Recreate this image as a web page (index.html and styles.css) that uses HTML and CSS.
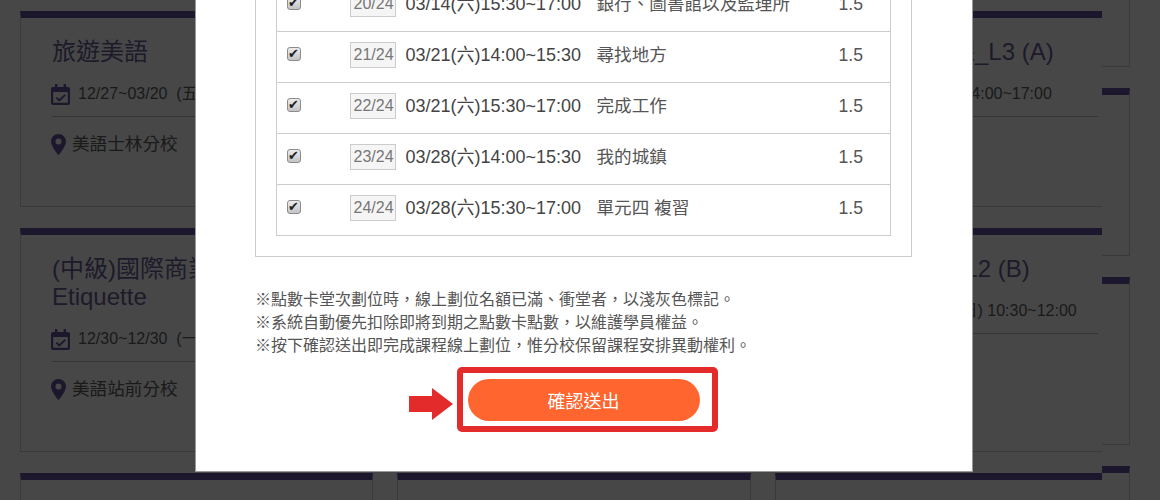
FILE: index.html
```html
<!DOCTYPE html>
<html lang="zh-Hant">
<head>
  <meta charset="UTF-8">
  <meta name="viewport" content="width=device-width, initial-scale=1.0">
  <title>課程線上劃位</title>
  <link rel="stylesheet" href="styles.css">
</head>
<body>
  <svg class="icon-defs" width="0" height="0">
    <symbol id="icon-date" viewBox="0 0 19 21">
      <path d="M4 0h2.4v3h6.2V0H15v3h2a2 2 0 0 1 2 2v14a2 2 0 0 1-2 2H2a2 2 0 0 1-2-2V5a2 2 0 0 1 2-2h2zM2.2 8v10.8h14.6V8z"/>
      <path d="M13.6 10.2l1.3 1.3-6.6 6.2-3.7-3.5 1.3-1.3 2.4 2.2z"/>
    </symbol>
    <symbol id="icon-pin" viewBox="0 0 15 21">
      <path fill-rule="evenodd" d="M7.5 0C3.4 0 0 3.3 0 7.4 0 12.6 7.5 21 7.5 21S15 12.6 15 7.4C15 3.3 11.6 0 7.5 0zm0 10.4a3 3 0 1 1 0-6 3 3 0 0 1 0 6z"/>
    </symbol>
  </svg>

  <div class="page">
    <div class="cards">
      <div class="card">
        <h3>旅遊美語</h3>
        <div class="card-date"><svg class="icon-cal"><use href="#icon-date"></use></svg>12/27~03/20&nbsp;&nbsp;(五) 14:00~17:00</div>
        <div class="card-place"><svg class="icon-pin"><use href="#icon-pin"></use></svg>美語士林分校</div>
      </div>
      <div class="card">
        <h3>生活美語會話_L1 (A)</h3>
        <div class="card-date"><svg class="icon-cal"><use href="#icon-date"></use></svg>12/27~03/20&nbsp;&nbsp;(五) 19:00~21:00</div>
        <div class="card-place"><svg class="icon-pin"><use href="#icon-pin"></use></svg>美語士林分校</div>
      </div>
      <div class="card card-last">
        <h3>生活美語會話課_L3 (A)</h3>
        <div class="card-date"><svg class="icon-cal"><use href="#icon-date"></use></svg>12/28~03/28&nbsp;&nbsp;(六) 14:00~17:00</div>
        <div class="card-place"><svg class="icon-pin"><use href="#icon-pin"></use></svg>美語站前分校</div>
      </div>

      <div class="card">
        <h3>(中級)國際商業禮儀 Business Etiquette</h3>
        <div class="card-date"><svg class="icon-cal"><use href="#icon-date"></use></svg>12/30~12/30&nbsp;&nbsp;(一) 09:00~17:00</div>
        <div class="card-place"><svg class="icon-pin"><use href="#icon-pin"></use></svg>美語站前分校</div>
      </div>
      <div class="card">
        <h3>職場美語會話_L2 (A)</h3>
        <div class="card-date"><svg class="icon-cal"><use href="#icon-date"></use></svg>01/04~03/29&nbsp;&nbsp;(六) 10:30~12:00</div>
        <div class="card-place"><svg class="icon-pin"><use href="#icon-pin"></use></svg>美語站前分校</div>
      </div>
      <div class="card card-last">
        <h3>職場美語會話_L2 (B)</h3>
        <div class="card-date"><svg class="icon-cal"><use href="#icon-date"></use></svg>01/05~03/29&nbsp;&nbsp;&nbsp;&nbsp;(六日) 10:30~12:00</div>
        <div class="card-place"><svg class="icon-pin"><use href="#icon-pin"></use></svg>美語士林分校</div>
      </div>

      <div class="card"></div>
      <div class="card"></div>
      <div class="card card-last"></div>
    </div>

    <div class="stubs">
      <div class="stub"></div>
      <div class="stub"></div>
      <div class="stub"></div>
      <div class="stub"></div>
    </div>
  </div>

  <div class="overlay"></div>

  <div class="modal">
    <div class="lesson-box">
      <table class="lessons">
        <tr>
          <td class="col-check"><input type="checkbox" checked></td>
          <td class="col-badge"><span class="badge">20/24</span></td>
          <td class="col-time">03/14(六)15:30~17:00</td>
          <td class="col-name">銀行、圖書館以及監理所</td>
          <td class="col-hours">1.5</td>
        </tr>
        <tr>
          <td class="col-check"><input type="checkbox" checked></td>
          <td class="col-badge"><span class="badge">21/24</span></td>
          <td class="col-time">03/21(六)14:00~15:30</td>
          <td class="col-name">尋找地方</td>
          <td class="col-hours">1.5</td>
        </tr>
        <tr>
          <td class="col-check"><input type="checkbox" checked></td>
          <td class="col-badge"><span class="badge">22/24</span></td>
          <td class="col-time">03/21(六)15:30~17:00</td>
          <td class="col-name">完成工作</td>
          <td class="col-hours">1.5</td>
        </tr>
        <tr>
          <td class="col-check"><input type="checkbox" checked></td>
          <td class="col-badge"><span class="badge">23/24</span></td>
          <td class="col-time">03/28(六)14:00~15:30</td>
          <td class="col-name">我的城鎮</td>
          <td class="col-hours">1.5</td>
        </tr>
        <tr>
          <td class="col-check"><input type="checkbox" checked></td>
          <td class="col-badge"><span class="badge">24/24</span></td>
          <td class="col-time">03/28(六)15:30~17:00</td>
          <td class="col-name">單元四 複習</td>
          <td class="col-hours">1.5</td>
        </tr>
      </table>
    </div>

    <div class="notes">
      <p>※點數卡堂次劃位時，線上劃位名額已滿、衝堂者，以淺灰色標記。</p>
      <p>※系統自動優先扣除即將到期之點數卡點數，以維護學員權益。</p>
      <p>※按下確認送出即完成課程線上劃位，惟分校保留課程安排異動權利。</p>
    </div>

    <div class="submit-row">
      <div class="submit-wrap">
        <svg class="submit-arrow" width="44" height="32" viewBox="0 0 44 32">
          <path d="M0 8h23V0l21 16-21 16v-8H0z"/>
        </svg>
        <button class="submit-btn">確認送出</button>
        <div class="submit-mark"></div>
      </div>
    </div>
  </div>
</body>
</html>
```

FILE: styles.css
```css
* {
  box-sizing: border-box;
}

html, body {
  height: 500px;
  margin: 0;
  overflow: hidden;
}

body {
  font-family: "Liberation Sans", "Noto Sans CJK TC", sans-serif;
  background-color: #ffffff;
  color: #5d5d5d;
}

.icon-defs {
  position: absolute;
}

.page {
  display: flex;
  align-items: flex-start;
  padding: 11px 0 0 20px;
}

.cards {
  display: grid;
  grid-template-columns: 353px 354px 327px;
  column-gap: 24px;
  row-gap: 21px;
  width: 1082px;
}

.card {
  border: 1px solid #d0d0d0;
  border-top: 7px solid #65559f;
  padding: 20px 4px 50px 31px;
}

.card-last {
  border-right: 0;
}

.card h3 {
  margin: 0;
  font-size: 24px;
  line-height: 28px;
  font-weight: normal;
  color: #6a6198;
}

.card-date {
  display: flex;
  align-items: center;
  margin-top: 16px;
  padding-bottom: 10px;
  font-size: 16px;
  line-height: 24px;
  white-space: nowrap;
  border-bottom: 1px solid #bbbbbb;
}

.card-place {
  display: flex;
  align-items: center;
  margin-top: 15px;
  font-size: 17.6px;
  line-height: 24px;
}

.icon-cal {
  width: 19px;
  height: 21px;
  margin-left: -1px;
  margin-right: 8px;
  fill: #65559f;
  flex-shrink: 0;
}

.icon-pin {
  width: 15px;
  height: 21px;
  margin-left: -1px;
  margin-right: 6px;
  fill: #65559f;
  flex-shrink: 0;
}

.stubs {
  width: 28px;
  margin-top: -112px;
}

.stub {
  height: 168px;
  margin-bottom: 21px;
  border-top: 7px solid #65559f;
  border-right: 1px solid #d0d0d0;
  border-bottom: 1px solid #d0d0d0;
}

.overlay {
  position: fixed;
  inset: 0;
  background: rgba(0, 0, 0, 0.72);
}

.modal {
  position: fixed;
  left: 195px;
  bottom: 28px;
  width: 778px;
  padding: 30px 60px 50px 59px;
  background: #ffffff;
  border: 1px solid #999999;
  color: #444444;
}

.lesson-box {
  padding: 0 20px 20px 20px;
  border: 1px solid #cccccc;
}

.lessons {
  width: 615px;
  table-layout: fixed;
  border-collapse: collapse;
  border: 1px solid #cccccc;
  font-size: 17.6px;
}

.lessons tr {
  height: 51px;
  border-bottom: 1px solid #cccccc;
}

.lessons td {
  padding: 10px 0 0;
  line-height: 26px;
  vertical-align: top;
  white-space: nowrap;
}

.lessons .col-check {
  width: 73px;
  padding: 15px 0 0 10px;
}

.col-badge {
  width: 56px;
}

.lessons .col-time {
  width: 191px;
  font-size: 18px;
}

.col-name {
  width: 242px;
  color: #555555;
}

.col-hours {
  color: #555555;
}

.lessons input {
  appearance: none;
  display: block;
  position: relative;
  width: 14px;
  height: 14px;
  margin: 0;
  border: 1px solid #8c8c8c;
  border-radius: 3px;
  background: linear-gradient(#ececec, #c4c4c4);
}

.lessons input::after {
  content: "✔";
  position: absolute;
  left: 0;
  top: -1px;
  font: 13px/13px "DejaVu Sans", sans-serif;
  color: #222222;
}

.badge {
  display: block;
  width: 46px;
  height: 26px;
  padding-left: 3px;
  border: 1px solid #cccccc;
  background: #f5f5f5;
  font-size: 16px;
  line-height: 24px;
  color: #777777;
}

.notes {
  margin-top: 31px;
  font-size: 16px;
  line-height: 23px;
  color: #555555;
}

.notes p {
  margin: 0;
  white-space: nowrap;
}

.submit-row {
  display: flex;
  justify-content: center;
  margin-top: 22px;
}

.submit-wrap {
  position: relative;
}

.submit-btn {
  display: block;
  width: 232px;
  height: 42px;
  border: 0;
  border-radius: 21px;
  background: #ff652e;
  color: #ffffff;
  font-family: inherit;
  font-size: 18px;
}

.submit-mark {
  position: absolute;
  left: -11px;
  top: -12px;
  width: 261px;
  height: 65px;
  border: 6px solid #e32b2b;
  border-radius: 5px;
}

.submit-arrow {
  position: absolute;
  left: -59px;
  top: 9px;
  fill: #e32b2b;
}
```
